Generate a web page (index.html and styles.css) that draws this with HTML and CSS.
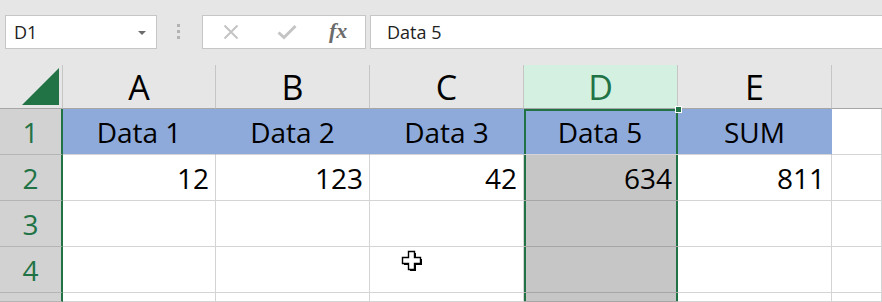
FILE: index.html
```html
<!DOCTYPE html>
<html>
<head>
    <title>Sheet</title>
    <meta charset="utf-8">
    <link rel="stylesheet" href="styles.css">
</head>
<body>
    <!-- Formula bar -->
    <div class="toolbar">
        <div class="namebox">
            <span>D1</span>
            <span class="arrow"></span>
        </div>
        <div class="grip"><i></i><i></i><i></i></div>
        <div class="fbuttons">
            <svg class="ficon" width="16" height="16" viewBox="0 0 16 16">
                <path d="M1.5 1.5 L14.5 14.5 M14.5 1.5 L1.5 14.5" stroke="#c4c4c4" stroke-width="2" fill="none"/>
            </svg>
            <svg class="ficon" width="20" height="16" viewBox="0 0 20 16">
                <path d="M1.5 8.5 L7 13.5 L18.5 2" stroke="#c4c4c4" stroke-width="3" fill="none"/>
            </svg>
            <span class="fx">fx</span>
        </div>
        <div class="finput">Data 5</div>
    </div>

    <!-- Grid -->
    <div class="sheet">
        <div class="corner"><span class="tri"></span></div>
        <div class="colhead">A</div>
        <div class="colhead">B</div>
        <div class="colhead">C</div>
        <div class="colhead active">D</div>
        <div class="colhead">E</div>
        <div class="colhead blank"></div>

        <div class="rowhead">1</div>
        <div class="cell blue center">Data 1</div>
        <div class="cell blue center">Data 2</div>
        <div class="cell blue center">Data 3</div>
        <div class="cell blue center sel top">Data 5<span class="handle"></span></div>
        <div class="cell blue center">SUM</div>
        <div class="cell"></div>

        <div class="rowhead">2</div>
        <div class="cell num">12</div>
        <div class="cell num">123</div>
        <div class="cell num">42</div>
        <div class="cell num sel">634</div>
        <div class="cell num">811</div>
        <div class="cell"></div>

        <div class="rowhead">3</div>
        <div class="cell"></div>
        <div class="cell"></div>
        <div class="cell"></div>
        <div class="cell sel"></div>
        <div class="cell"></div>
        <div class="cell"></div>

        <div class="rowhead">4</div>
        <div class="cell"></div>
        <div class="cell"></div>
        <div class="cell"></div>
        <div class="cell sel"></div>
        <div class="cell"></div>
        <div class="cell"></div>

        <!-- row 5, only its top edge is in view -->
        <div class="rowhead"></div>
        <div class="cell"></div>
        <div class="cell"></div>
        <div class="cell"></div>
        <div class="cell sel"></div>
        <div class="cell"></div>
        <div class="cell"></div>
    </div>

    <!-- mouse pointer -->
    <svg class="pointer" width="24" height="24" viewBox="0 0 24 24">
        <path d="M9 2 H15 V8 H21 V14 H15 V20 H9 V14 H3 V8 H9 Z" fill="#000" transform="translate(1,1)"/>
        <path d="M8.5 1.5 H14.5 V7.5 H20.5 V13.5 H14.5 V19.5 H8.5 V13.5 H2.5 V7.5 H8.5 Z" fill="#fff" stroke="#000" stroke-width="1.4"/>
    </svg>
</body>
</html>
```

FILE: styles.css
```css
body {
    margin: 0;
    background-color: #e6e6e6;
    font-family: "Open Sans", "Noto Sans", sans-serif;
    overflow: hidden;
    position: relative;
    height: 302px;
}
/* Formula bar */
.toolbar {
    height: 65px;
    box-sizing: border-box;
    padding: 15px 0 0 5px;
    display: flex;
    align-items: flex-start;
}
.namebox {
    width: 152px;
    height: 34px;
    box-sizing: border-box;
    border: 1px solid #c6c6c6;
    background-color: #fff;
    display: flex;
    align-items: center;
    justify-content: space-between;
    padding: 0 10px 0 8px;
    font-size: 18px;
    color: #222;
}
.arrow {
    width: 0;
    height: 0;
    border-left: 4px solid transparent;
    border-right: 4px solid transparent;
    border-top: 4px solid #6b6b6b;
    margin-top: 1px;
}
.grip {
    width: 3px;
    margin: 9px 22px 0 20px;
    display: flex;
    flex-direction: column;
    gap: 3px;
}
.grip i {
    display: block;
    width: 3px;
    height: 3px;
    background-color: #b3b3b3;
}
.fbuttons {
    width: 164px;
    height: 34px;
    box-sizing: border-box;
    border: 1px solid #c6c6c6;
    background-color: #fff;
    display: flex;
    align-items: center;
    padding: 0 0 0 20px;
}
.ficon {
    margin-right: 38px;
}
.ficon + .ficon {
    margin-right: 32px;
}
.fx {
    font-family: "Liberation Serif", serif;
    font-style: italic;
    font-weight: bold;
    font-size: 22px;
    color: #6b6b6b;
    margin-top: -3px;
}
.finput {
    flex: 1;
    height: 34px;
    box-sizing: border-box;
    margin-left: 4px;
    border: 1px solid #c6c6c6;
    border-right: 0;
    background-color: #fff;
    font-size: 18px;
    color: #222;
    line-height: 32px;
    padding-left: 16px;
}
/* Sheet grid */
.sheet {
    display: grid;
    grid-template-columns: 63px 153px 154px 154px 154px 154px 1fr;
    grid-template-rows: 44px 46px 46px 46px 46px 9px;
    background-color: #fff;
}
.corner {
    background-color: #e6e6e6;
    border-right: 1px solid #c6c6c6;
    border-bottom: 1px solid #a6a6a6;
    position: relative;
}
.tri {
    position: absolute;
    right: 3px;
    bottom: 3px;
    width: 0;
    height: 0;
    border-left: 37px solid transparent;
    border-bottom: 37px solid #217346;
}
.colhead {
    background-color: #e6e6e6;
    border-right: 1px solid #c6c6c6;
    border-bottom: 1px solid #a6a6a6;
    text-align: center;
    font-size: 34px;
    line-height: 44px;
    color: #000;
}
.colhead.active {
    background-color: #d3f0e0;
    color: #217346;
}
.colhead.blank {
    border-right: 0;
}
.rowhead {
    background-color: #d2d2d2;
    border-right: 2px solid #217346;
    border-bottom: 1px solid #b5b5b5;
    text-align: center;
    font-size: 28px;
    line-height: 38px;
    color: #217346;
    display: flex;
    align-items: flex-end;
    justify-content: center;
    padding-bottom: 3px;
    box-sizing: border-box;
}
.cell {
    border-right: 1px solid #d4d4d4;
    border-bottom: 1px solid #d4d4d4;
    font-size: 28px;
    line-height: 38px;
    color: #000;
    display: flex;
    align-items: flex-end;
    padding: 0 6px 3px 6px;
    box-sizing: border-box;
    position: relative;
}
.blue {
    background-color: #8eaadb;
    border-right-color: #8eaadb;
}
.center {
    justify-content: center;
}
.num {
    justify-content: flex-end;
}
.sel {
    border-right: 0;
    box-shadow: inset 2px 0 #217346, inset -2px 0 #217346;
}
.sel:not(.blue) {
    background-color: #c6c6c6;
    border-bottom-color: #a6a6a6;
}
.sel.top {
    box-shadow: inset 2px 0 #217346, inset -2px 0 #217346, inset 0 2px #217346;
    padding-right: 8px;
}
.handle {
    position: absolute;
    z-index: 2;
    top: -3px;
    right: -4px;
    width: 5px;
    height: 5px;
    background-color: #217346;
    border: 1px solid #fff;
}
.pointer {
    position: absolute;
    left: 400px;
    top: 250px;
}
```
